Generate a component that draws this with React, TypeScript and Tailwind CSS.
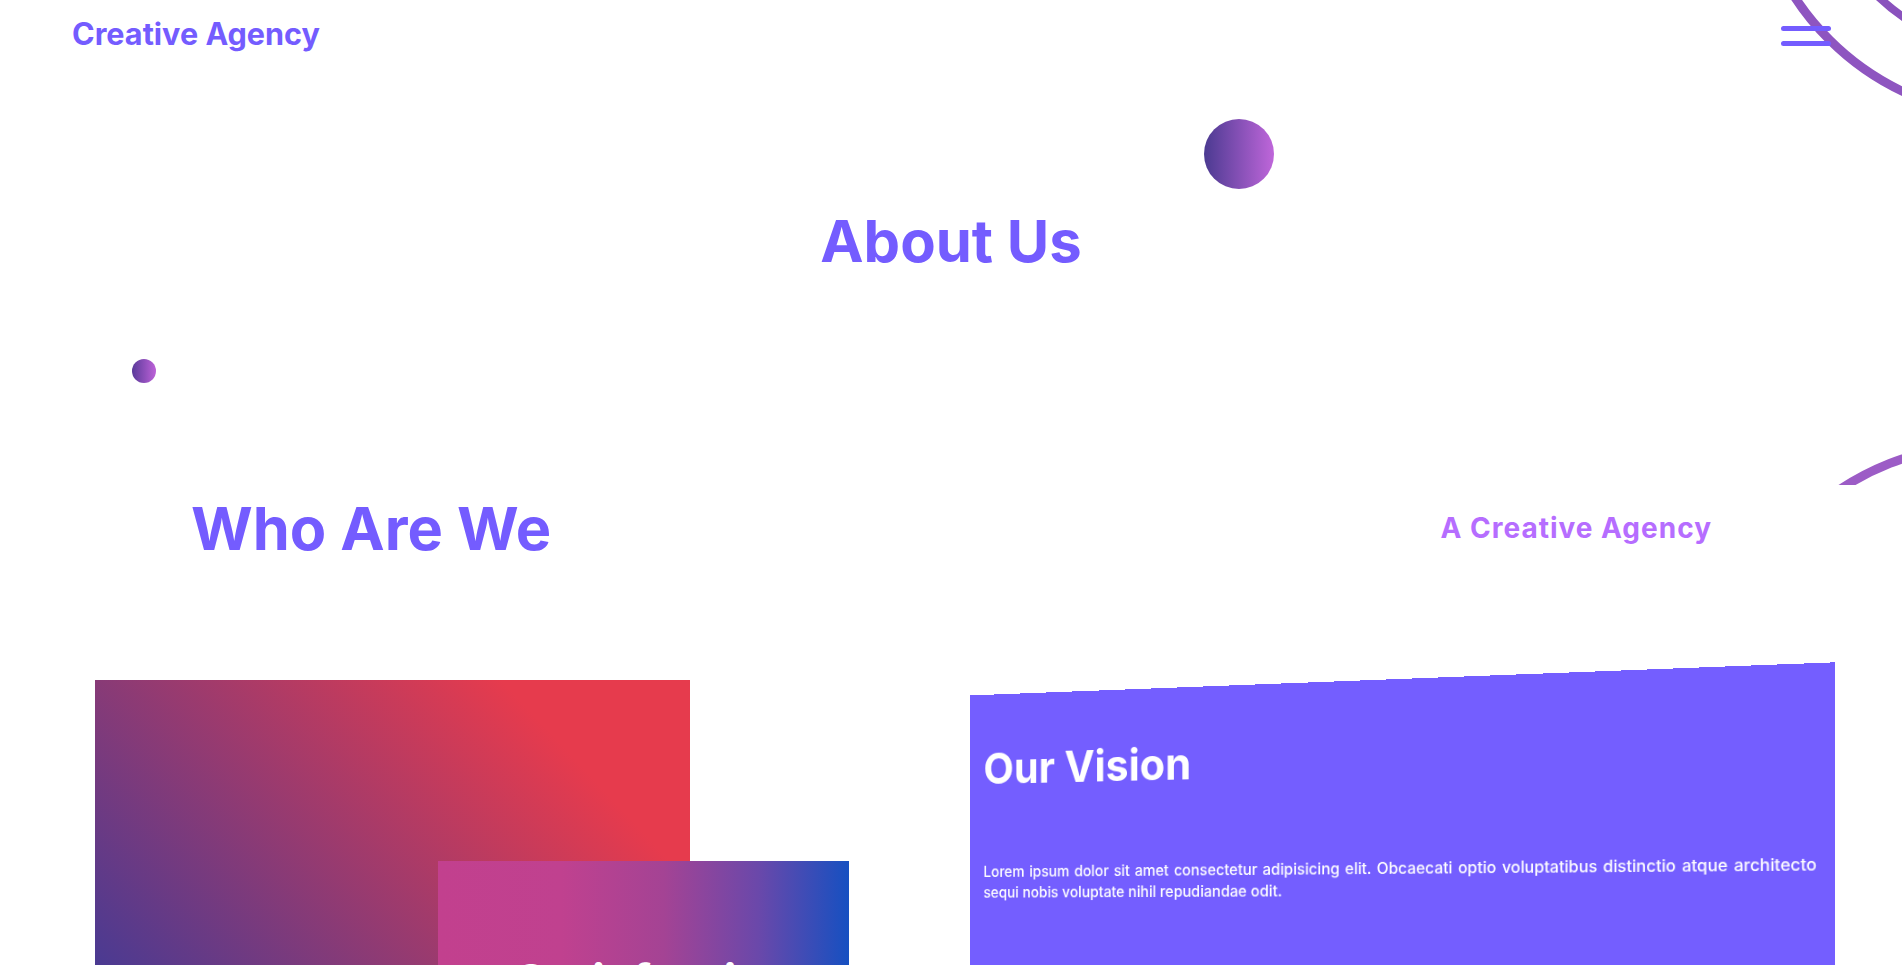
export default function App() {
  return (
    <div className="relative h-[965px] w-full overflow-hidden bg-white font-['Inter',sans-serif]">
      <section className="relative h-[485px] overflow-hidden">
        <svg
          className="absolute right-0 top-0"
          width="200"
          height="140"
          viewBox="1702 0 200 140"
          fill="none"
        >
          <circle cx="2016" cy="-147" r="264" stroke="#8e55c0" strokeWidth="9" />
          <circle cx="2016" cy="-147" r="199" stroke="#8a52bd" strokeWidth="8" />
        </svg>
        <svg
          className="absolute left-[1700px] top-[400px]"
          width="202"
          height="85"
          viewBox="1700 400 202 85"
          fill="none"
        >
          <circle cx="1989" cy="714" r="269.5" stroke="#9c5cc6" strokeWidth="9" />
        </svg>
        <header className="relative z-10 flex items-start justify-between pl-[72px] pr-[71px] pt-[19px]">
          <a className="text-[30.6px] font-bold leading-[30px] text-[#745cff]">Creative Agency</a>
          <button className="mt-[7px] flex w-[50px] flex-col gap-[10px]">
            <span className="h-[5px] w-full rounded-full bg-[#745cff]" />
            <span className="h-[5px] w-full rounded-full bg-[#745cff]" />
          </button>
        </header>
        <h1 className="mt-[163px] text-center text-[58px] font-bold leading-[58px] text-[#745cff]">
          About Us
        </h1>
        <span className="absolute left-[1204px] top-[119px] h-[70px] w-[70px] rounded-full bg-[linear-gradient(90deg,#4b3a91,#bf66da)]" />
        <span className="absolute left-[132px] top-[359px] h-[24px] w-[24px] rounded-full bg-[linear-gradient(90deg,#5a3a9a,#bd62d8)]" />
      </section>

      <section className="flex items-center justify-between pl-[191px] pr-[190px] pt-[13px]">
        <h2 className="text-[59.5px] font-bold leading-[60px] text-[#745cff]">Who Are We</h2>
        <h3 className="text-[28px] font-bold leading-[30px] tracking-[1px] text-[#b66dff]">A Creative Agency</h3>
      </section>

      <section className="mt-[122px] flex pl-[95px]">
        <div className="relative h-[487px] w-[842px] shrink-0">
          <div className="h-full w-[595px] bg-[linear-gradient(47deg,#4a3a92_18%,#e63b4d_82%)]" />
          <div className="absolute left-[343px] top-[181px] h-[306px] w-[411px] bg-[linear-gradient(90deg,#c2408e_0%,#c0418f_30%,#a44394_55%,#6a48aa_78%,#1650c1_100%)] pl-[77px] pt-[97px]">
            <h3 className="text-[48px] font-bold leading-[48px] text-white">Satisfaction</h3>
          </div>
        </div>
        <div className="h-[487px] w-[872px] shrink-0 bg-[#745eff] px-4 pt-[56px] text-white [transform:perspective(1000px)_rotateY(-8.94deg)]">
          <h3 className="text-[45px] font-bold leading-[45px]">Our Vision</h3>
          <p className="mt-[77px] text-justify text-[15.5px] font-medium leading-[22px]">
            Lorem ipsum dolor sit amet consectetur adipisicing elit. Obcaecati optio voluptatibus distinctio atque architecto sequi nobis voluptate nihil repudiandae odit.
          </p>
        </div>
      </section>
    </div>
  );
}
